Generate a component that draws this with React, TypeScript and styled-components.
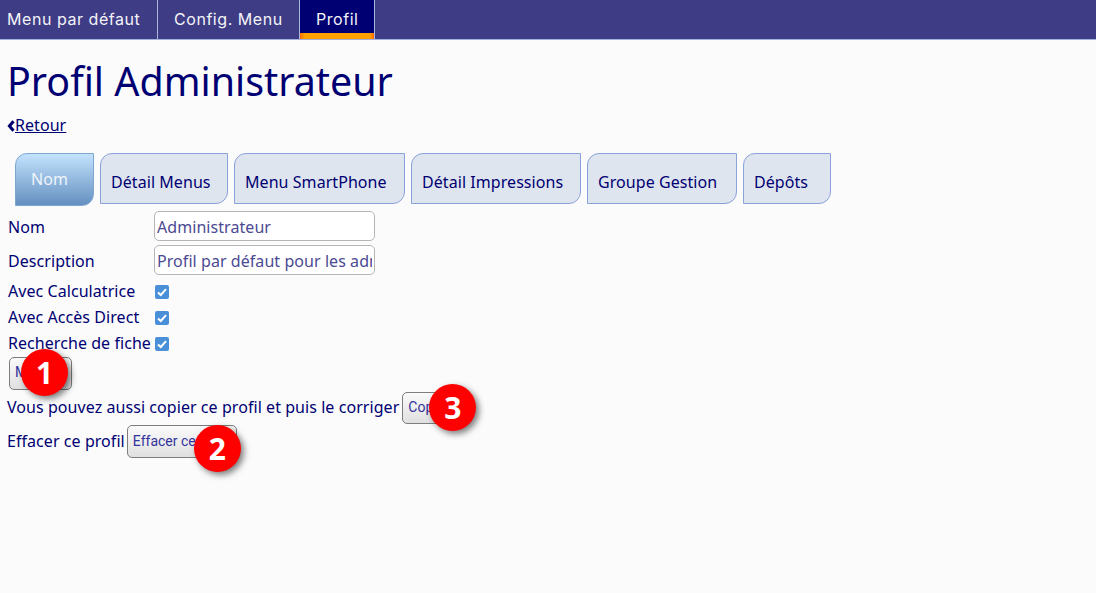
import React from 'react';
import styled, { createGlobalStyle } from 'styled-components';

const GlobalStyle = createGlobalStyle`
  html, body {
    margin: 0;
    padding: 0;
    height: 100%;
    background: #fbfbfb;
    color: #000073;
    font-family: "Noto Sans", "Open Sans", sans-serif;
    font-size: 16px;
    letter-spacing: 0.06px;
  }
`;

const NavBar = styled.nav`
  display: flex;
  height: 39px;
  background: #3e3c85;
  border-bottom: 1px solid #a3b1dc;
`;

const NavItem = styled.a<{ $active?: boolean; $width: number }>`
  box-sizing: border-box;
  width: ${({ $width }) => $width}px;
  padding: 9px 0 0 16px;
  border-right: 1px solid #a9b7e0;
  color: #f4f4f8;
  font-family: Inter, "Open Sans", sans-serif;
  font-size: 16px;
  letter-spacing: 0.55px;
  line-height: 20px;
  background: ${({ $active }) =>
    $active
      ? 'linear-gradient(90deg, #ff6a00, #ffa200 6%, #ffa200 94%, #ff6a00) bottom / 100% 6px no-repeat, #000073'
      : 'transparent'};
  &:first-child {
    padding-left: 7px;
  }
`;

const Page = styled.main`
  padding: 0 7px;
`;

const Title = styled.h1`
  margin: 13px 0 0;
  font-size: 39.4px;
  letter-spacing: 0;
  line-height: 56px;
  font-weight: 400;
  color: #000073;
`;

const BackLink = styled.a`
  display: inline-flex;
  align-items: center;
  margin-top: 6px;
  color: #000073;
  font-size: 16px;
  line-height: 21px;
  text-decoration: underline;
`;

const TabRow = styled.div`
  display: flex;
  align-items: flex-start;
  gap: 6px;
  margin: 16px 0 5px 8px;
`;

const Tab = styled.div<{ $active?: boolean; $width: number }>`
  box-sizing: border-box;
  width: ${({ $width }) => $width}px;
  height: ${({ $active }) => ($active ? 53 : 51)}px;
  padding: ${({ $active }) => ($active ? '14px 0 0 15px' : '17px 0 0 10px')};
  border: 1px solid ${({ $active }) => ($active ? '#7ea6d2' : '#8aa2dc')};
  border-radius: 12px 0 12px 0;
  font-size: 16px;
  line-height: 22px;
  white-space: nowrap;
  color: ${({ $active }) => ($active ? '#eef4fb' : '#000073')};
  background: ${({ $active }) =>
    $active ? 'linear-gradient(#c3e2fd, #6490c0)' : '#dfe5ee'};
`;

const FieldRow = styled.div`
  display: flex;
  align-items: center;
  height: 30px;
  margin-bottom: 4px;
`;

const CheckRow = styled.div`
  display: flex;
  align-items: center;
  height: 26px;
`;

const Label = styled.label<{ $shift: number }>`
  width: 146px;
  padding-left: 1px;
  white-space: nowrap;
  font-size: 16px;
  color: #000073;
  transform: translateY(${({ $shift }) => $shift}px);
`;

const TextInput = styled.input`
  box-sizing: border-box;
  width: 221px;
  height: 30px;
  padding: 2px 2px 0;
  border: 1px solid #b5b5b5;
  border-radius: 5px;
  background: #fff;
  color: #4b4a92;
  font-family: "Noto Sans", sans-serif;
  font-size: 16px;
  letter-spacing: 0.06px;
  outline: none;
`;

const checkMark =
  "url(\"data:image/svg+xml,%3Csvg xmlns='http://www.w3.org/2000/svg' viewBox='0 0 14 14'%3E%3Cpath d='M3 7.4 5.8 10 11 4.2' fill='none' stroke='white' stroke-width='2'/%3E%3C/svg%3E\")";

const Check = styled.input`
  appearance: none;
  width: 14px;
  height: 14px;
  margin: 0 0 0 1px;
  border-radius: 2px;
  background: #4a90d9 ${checkMark} center / 14px 14px no-repeat;
`;

const ButtonWrap = styled.span`
  position: relative;
  display: inline-block;
`;

const ActionButton = styled.button<{ $width: number; $height: number }>`
  box-sizing: border-box;
  display: block;
  width: ${({ $width }) => $width}px;
  height: ${({ $height }) => $height}px;
  padding: 0 5px 2px;
  overflow: hidden;
  border: 1px solid #7d7d7d;
  border-radius: 5px;
  background: linear-gradient(#fafafa, #e0e0e0);
  color: #33339c;
  font-family: Roboto, "Liberation Sans", sans-serif;
  font-size: 14px;
  text-align: left;
  white-space: nowrap;
`;

const Badge = styled.span<{ $left: number; $top: number }>`
  position: absolute;
  left: ${({ $left }) => $left}px;
  top: ${({ $top }) => $top}px;
  width: 47px;
  height: 47px;
  border-radius: 50%;
  background: #fe0000;
  box-shadow: 3px 3px 6px rgba(0, 0, 0, 0.5);
  color: #fff;
  font-family: "Open Sans", sans-serif;
  font-size: 30px;
  font-weight: 700;
  line-height: 47px;
  text-align: center;
`;

const ModifyRow = styled.div`
  display: flex;
  margin-left: 2px;
`;

const TextLine = styled.div<{ $height: number; $gap: number }>`
  display: flex;
  align-items: center;
  gap: ${({ $gap }) => $gap}px;
  height: ${({ $height }) => $height}px;
  white-space: nowrap;
  font-size: 16px;
`;

const Caption = styled.span`
  margin-bottom: 2px;
`;

const tabs = [
  { label: 'Détail Menus', width: 128 },
  { label: 'Menu SmartPhone', width: 171 },
  { label: 'Détail Impressions', width: 170 },
  { label: 'Groupe Gestion', width: 150 },
  { label: 'Dépôts', width: 88 },
];
const checks = ['Avec Calculatrice', 'Avec Accès Direct', 'Recherche de fiche'];

export default function App() {
  return (
    <>
      <GlobalStyle />
      <NavBar>
        <NavItem $width={158}>Menu par défaut</NavItem>
        <NavItem $width={142}>Config. Menu</NavItem>
        <NavItem $active $width={75}>Profil</NavItem>
      </NavBar>
      <Page>
        <Title>Profil Administrateur</Title>
        <BackLink>
          <svg width="8" height="12" viewBox="0 0 8 12" aria-hidden="true">
            <path d="M6.5 1.2 2.4 6l4.1 4.8" fill="none" stroke="#000073" strokeWidth="3" />
          </svg>
          Retour
        </BackLink>
        <TabRow>
          <Tab $active $width={79}>Nom</Tab>
          {tabs.map((t) => (
            <Tab key={t.label} $width={t.width}>{t.label}</Tab>
          ))}
        </TabRow>
        <FieldRow>
          <Label $shift={1}>Nom</Label>
          <TextInput readOnly value="Administrateur" />
        </FieldRow>
        <FieldRow>
          <Label $shift={1}>Description</Label>
          <TextInput readOnly value="Profil par défaut pour les administrateurs" />
        </FieldRow>
        {checks.map((c) => (
          <CheckRow key={c}>
            <Label $shift={-1}>{c}</Label>
            <Check type="checkbox" readOnly checked />
          </CheckRow>
        ))}
        <ModifyRow>
          <ButtonWrap>
            <ActionButton $width={63} $height={33}>Modifier</ActionButton>
            <Badge $left={12} $top={-8}>1</Badge>
          </ButtonWrap>
        </ModifyRow>
        <TextLine $height={36} $gap={3}>
          <Caption>Vous pouvez aussi copier ce profil et puis le corriger</Caption>
          <ButtonWrap>
            <ActionButton $width={50} $height={32}>Copier</ActionButton>
            <Badge $left={27} $top={-8}>3</Badge>
          </ButtonWrap>
        </TextLine>
        <TextLine $height={32} $gap={2}>
          <Caption>Effacer ce profil</Caption>
          <ButtonWrap>
            <ActionButton $width={110} $height={33}>Effacer ce profil</ActionButton>
            <Badge $left={67} $top={0}>2</Badge>
          </ButtonWrap>
        </TextLine>
      </Page>
    </>
  );
}
